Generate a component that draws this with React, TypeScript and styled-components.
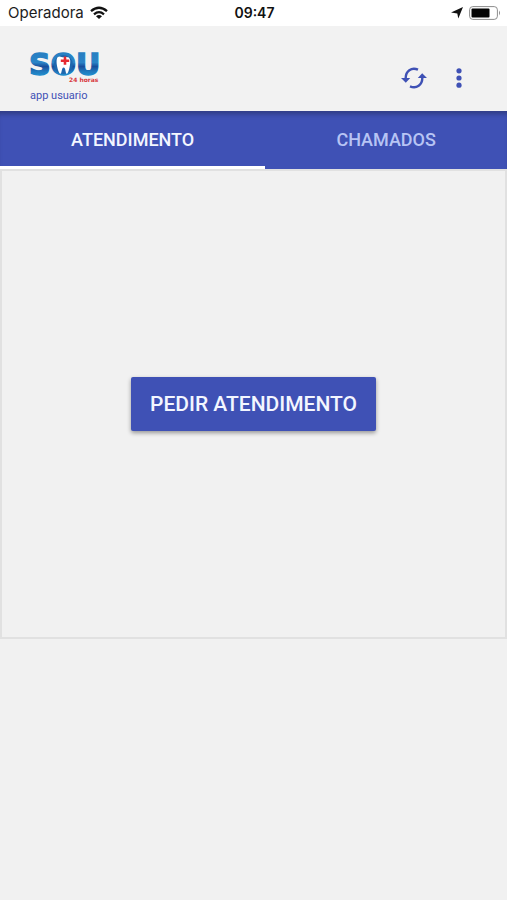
import React, { useState } from "react";
import styled, { createGlobalStyle } from "styled-components";

const indigo = "#3f51b5";

const GlobalStyle = createGlobalStyle`
  * { box-sizing: border-box; }
  body { margin: 0; background: #f1f1f1; font-family: Roboto, sans-serif; }
  button { font-family: inherit; border: 0; cursor: pointer; }
`;

const StatusBar = styled.div`
  display: grid;
  grid-template-columns: 1fr auto 1fr;
  align-items: center;
  height: 26px;
  padding: 0 6px 0 8px;
  background: #fff;
  color: #1c1c1c;
  font: 400 15px/26px Inter, sans-serif;
`;

const StatusGroup = styled.div<{ $end?: boolean }>`
  display: flex;
  align-items: center;
  justify-content: ${(p) => (p.$end ? "flex-end" : "flex-start")};
  gap: 6px;
`;

const Clock = styled.time`
  font-size: 14px;
  font-weight: 600;
  color: #111;
`;

const AppBar = styled.header`
  display: flex;
  justify-content: space-between;
  height: 85px;
  padding: 16px 30px 0 26px;
  background: #f2f2f2;
`;

const Brand = styled.div`
  display: flex;
  flex-direction: column;
  gap: 4px;
  color: ${indigo};
  font-size: 11px;
  line-height: 14px;
`;

const BrandCaption = styled.span`
  padding-left: 4px;
`;

const Actions = styled.div`
  display: flex;
  gap: 9px;
  padding-top: 18px;
`;

const IconButton = styled.button`
  display: grid;
  place-items: center;
  width: 36px;
  height: 36px;
  padding: 0;
  background: none;
  color: ${indigo};
`;

const Tabs = styled.div`
  display: flex;
  height: 58px;
  background: ${indigo};
  box-shadow: inset 0 6px 5px -3px #303c83;
`;

const Tab = styled.button<{ $active: boolean }>`
  flex: 1 1 auto;
  padding: 3px 0 0;
  background: none;
  border-bottom: 3px solid ${(p) => (p.$active ? "#fff" : "transparent")};
  color: ${(p) => (p.$active ? "#f3f6ff" : "#b7c4f4")};
  font-size: 18px;
  font-weight: 500;
  line-height: 24px;
`;

const Panel = styled.main`
  display: flex;
  justify-content: center;
  padding: 206px 16px;
  border: 2px solid #e1e1e1;
  background: #f1f1f1;
`;

const PrimaryButton = styled.button`
  height: 54px;
  padding: 0 19px;
  border-radius: 2px;
  background: ${indigo};
  color: #f3f6ff;
  font-size: 21px;
  font-weight: 500;
  line-height: 24px;
  box-shadow: 0 2px 4px rgba(0, 0, 0, 0.38);
`;

const Wifi = () => (
  <svg width="18" height="14" viewBox="0 0 18 14" fill="none" stroke="#111" strokeWidth="2.3" aria-label="Wi-Fi">
    <path d="M1 5.2Q9-1.7 17 5.2M4 8.3Q9 4 14 8.3" />
    <path d="M9 13 6 10.2Q9 7.8 12 10.2Z" fill="#111" stroke="none" />
  </svg>
);

const LocationArrow = () => (
  <svg width="12" height="12" viewBox="0 0 12 12" aria-label="Localização">
    <path d="M12 0 7.3 11.5 6.3 6.6 0 5.6Z" fill="#111" />
  </svg>
);

const Battery = () => (
  <svg width="32" height="14" viewBox="0 0 32 14" aria-label="Bateria">
    <rect x="0.6" y="0.6" width="27.8" height="12.8" rx="3.2" fill="#fff" stroke="#8c8c8c" />
    <rect x="2.5" y="2.5" width="18" height="9" rx="1" fill="#050505" />
    <path d="M30 4.6Q32 7 30 9.4Z" fill="#8c8c8c" />
  </svg>
);

const Logo = () => (
  <svg width="76" height="43" viewBox="-4 -10 76 43" role="img" aria-label="SOU 24 horas">
    <defs>
      <linearGradient id="sou" gradientUnits="userSpaceOnUse" x1="0" y1="0" x2="0" y2="25">
        <stop offset="0" stopColor="#277fc2" />
        <stop offset="0.42" stopColor="#2a83c6" />
        <stop offset="0.58" stopColor="#174f9c" />
        <stop offset="0.78" stopColor="#2179bd" />
        <stop offset="1" stopColor="#2196d4" />
      </linearGradient>
    </defs>
    <text
      x="-1"
      y="23"
      fill="url(#sou)"
      stroke="url(#sou)"
      strokeWidth="1.4"
      fontFamily="DejaVu Sans, sans-serif"
      fontWeight="700"
      fontSize="30"
    >
      SOU
    </text>
    <ellipse cx="33.4" cy="12.5" rx="9.5" ry="9.5" fill="#1e67ae" />
    <path
      d="M27.8 5C29.8 3.5 31.5 5.2 33.5 5.2 35.5 5.2 39.7 4 40.2 8.5 40.5 12.5 38.8 21 36.9 21.8 35.2 22.3 36 15.5 33.6 15.5 31.3 15.5 32 22.3 30.3 21.8 28.2 21 24.8 8 27.8 5Z"
      fill="#fff"
    />
    <path d="M33.7 4.6h2.6v2.8h2.9V10h-2.9v2.8h-2.6V10h-2.9V7.4h2.9Z" fill="#e62b32" />
    <text x="39" y="30" fill="#d83a3f" fontFamily="DejaVu Sans, sans-serif" fontWeight="700" fontSize="6">
      24 horas
    </text>
  </svg>
);

const Refresh = () => (
  <svg width="26" height="22" viewBox="0 0 26 22" fill="none" stroke="currentColor" strokeWidth="2.4" aria-hidden="true">
    <path d="M17 2.7C10.5-.2 4.5 4.2 4.7 11.4" />
    <path d="M9 19.3C15.5 22.2 21.5 17.8 21.3 10.6" />
    <path d="M0 11h9.2L4.8 15.7ZM16.8 11H26L21.2 6.3Z" fill="currentColor" stroke="none" />
  </svg>
);

const More = () => (
  <svg width="6" height="20" viewBox="0 0 6 20" fill="currentColor" aria-hidden="true">
    <circle cx="3" cy="2.8" r="2.6" />
    <circle cx="3" cy="10" r="2.6" />
    <circle cx="3" cy="17.2" r="2.6" />
  </svg>
);

const tabNames = ["ATENDIMENTO", "CHAMADOS"];

export default function App() {
  const [active, setActive] = useState(0);
  return (
    <>
      <GlobalStyle />
      <StatusBar>
        <StatusGroup>
          Operadora
          <Wifi />
        </StatusGroup>
        <Clock>09:47</Clock>
        <StatusGroup $end>
          <LocationArrow />
          <Battery />
        </StatusGroup>
      </StatusBar>
      <AppBar>
        <Brand>
          <Logo />
          <BrandCaption>app usuario</BrandCaption>
        </Brand>
        <Actions>
          <IconButton type="button" aria-label="Atualizar">
            <Refresh />
          </IconButton>
          <IconButton type="button" aria-label="Mais opções">
            <More />
          </IconButton>
        </Actions>
      </AppBar>
      <Tabs role="tablist">
        {tabNames.map((name, i) => (
          <Tab key={name} type="button" role="tab" aria-selected={active === i} $active={active === i} onClick={() => setActive(i)}>
            {name}
          </Tab>
        ))}
      </Tabs>
      <Panel>
        <PrimaryButton type="button">PEDIR ATENDIMENTO</PrimaryButton>
      </Panel>
    </>
  );
}
